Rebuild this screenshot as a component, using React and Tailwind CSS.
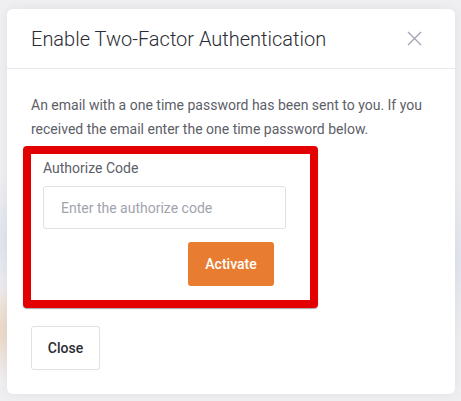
export default function App() {
  return (
    <div className="w-[461px] h-[401px] overflow-hidden bg-[#efeff1] bg-[radial-gradient(ellipse_40px_60px_at_0px_240px,#dfe4ee,transparent),radial-gradient(ellipse_40px_50px_at_0px_330px,#ecd8c6,transparent),radial-gradient(ellipse_30px_80px_at_461px_260px,#e1e5ee,transparent)] font-['Roboto',sans-serif] pt-[9px] pl-[7px]">
      <div className="w-[448px] h-[385px] bg-white rounded-[6px] shadow-[0_0_12px_rgba(0,0,0,0.06)] flex flex-col">
        <div className="h-[60px] flex items-center justify-between pl-6 pr-[33px] border-b border-[#e6e7ea]">
          <h2 className="text-[20px] font-light text-[#2a2d33] leading-none">
            Enable Two-Factor Authentication
          </h2>
          <svg width="15" height="15" viewBox="0 0 15 15" className="text-[#a4a7b3]">
            <path d="M1 1L14 14M14 1L1 14" stroke="currentColor" strokeWidth="1.4" />
          </svg>
        </div>

        <div className="px-6 pt-6">
          <p className="text-[14px] leading-[24px] text-[#5d6069] mb-[5px]">
            An email with a one time password has been sent to you. If you
            received the email enter the one time password below.
          </p>

          <div className="-ml-2 w-[295px] border-8 border-[#e20000] rounded-[4px] shadow-[0_1px_1px_rgba(0,0,0,0.35)] bg-white pl-3 pt-1 pb-[14px]">
            <label className="block text-[14px] leading-[21px] text-[#5d6069]">
              Authorize Code
            </label>
            <input
              type="text"
              placeholder="Enter the authorize code"
              className="mt-[7px] block w-[243px] h-[43px] border border-[#dfe1e5] rounded-[3px] pl-[17px] text-[14px] text-[#2a2d33] placeholder:text-[#a1a4ac] outline-none"
            />
            <div className="mt-[13px] flex justify-end w-[243px] pr-3">
              <button className="w-[86px] h-[44px] rounded-[3px] bg-[#e87c30] text-white text-[14px] font-medium">
                Activate
              </button>
            </div>
          </div>

          <button className="mt-[18px] w-[69px] h-[44px] rounded-[3px] border border-[#dfe1e5] bg-white text-[#2a2d33] text-[14px] font-medium">
            Close
          </button>
        </div>
      </div>
    </div>
  );
}
